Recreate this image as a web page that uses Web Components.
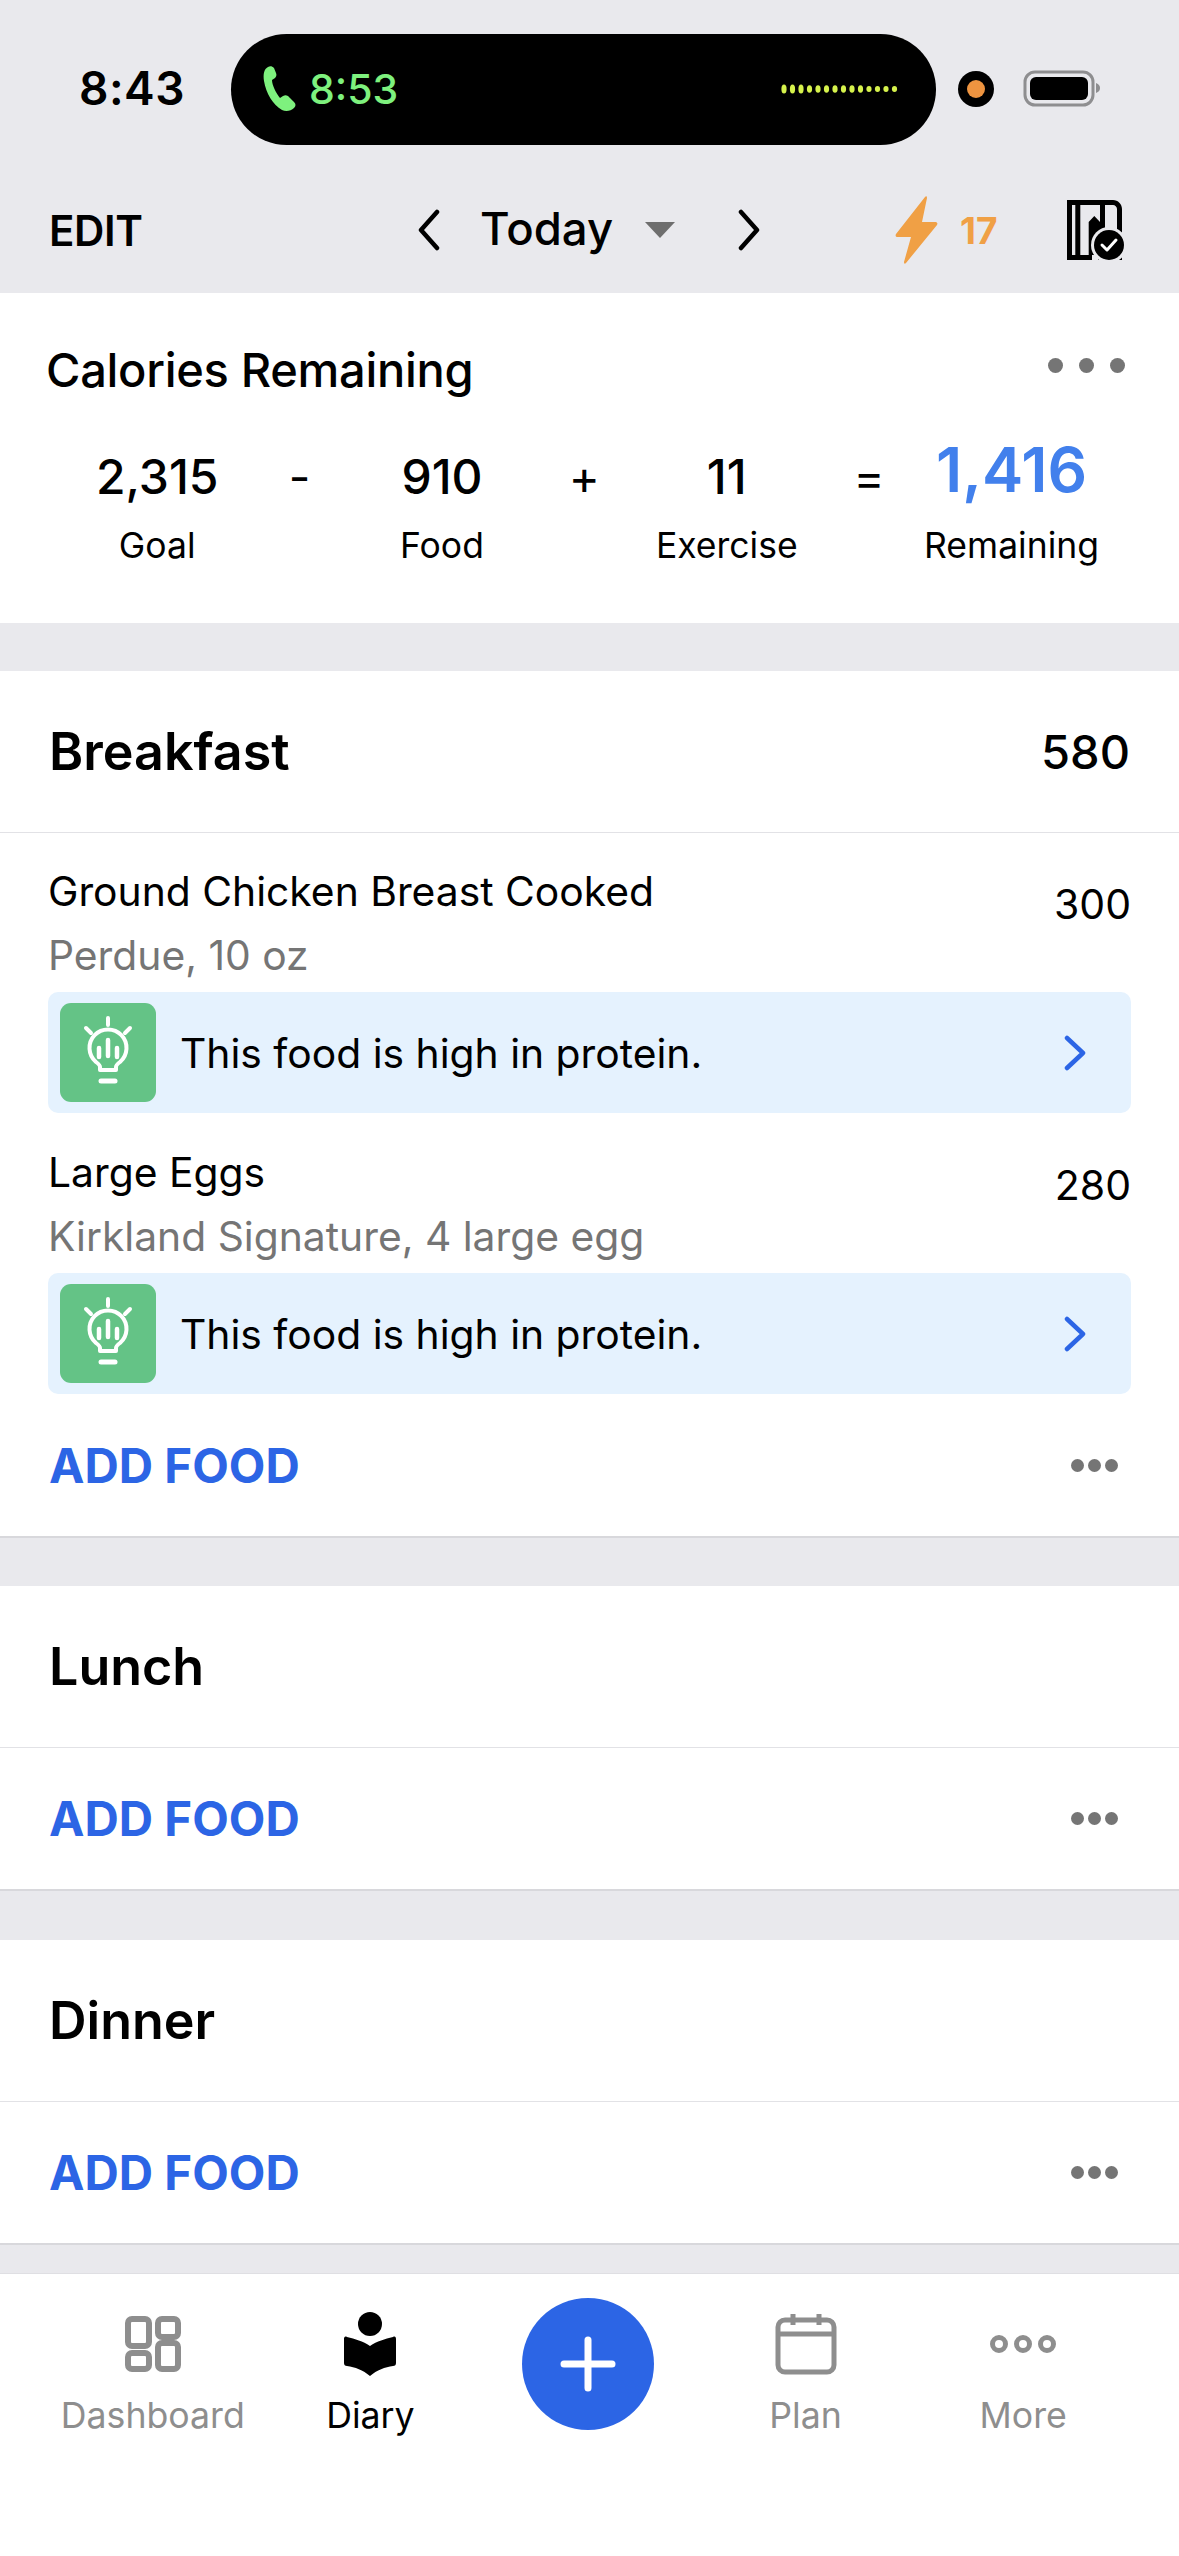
<!DOCTYPE html>
<html lang="en">

<head>
  <meta charset="UTF-8" />
  <title>Diary</title>
  <style>
    html, body {
      margin: 0;
      height: 2556px;
      overflow: hidden;
      background: #e9e9ed;
      font-family: Inter, "Liberation Sans", sans-serif;
      color: #000;
    }

    diary-app {
      --blue: #2c65e5;
      --gray: #757575;
    }
  </style>
</head>

<body>
  <diary-app>
    <status-bar></status-bar>
    <nav-bar></nav-bar>
    <calorie-card></calorie-card>
    <meal-section name="Breakfast" total="580" style="margin-top:48px">
      <food-item name="Ground Chicken Breast Cooked" detail="Perdue, 10 oz" cal="300"></food-item>
      <food-item name="Large Eggs" detail="Kirkland Signature, 4 large egg" cal="280"></food-item>
    </meal-section>
    <meal-section name="Lunch" style="margin-top:48px"></meal-section>
    <meal-section name="Dinner" style="margin-top:49px"></meal-section>
    <tab-bar></tab-bar>
  </diary-app>

  <script>
    class Base extends HTMLElement {
      constructor() {
        super();
        this.attachShadow({ mode: "open" });
      }

      connectedCallback() {
        this.shadowRoot.innerHTML = this.render();
      }

      attr(name) {
        return this.getAttribute(name) || "";
      }
    }

    class DiaryApp extends Base {
      render() {
        return `
      <style>
        :host { display: flex; flex-direction: column; height: 2556px; }
      </style>
      <slot></slot>`;
      }
    }

    class StatusBar extends Base {
      render() {
        return `
      <style>
        :host { display: flex; align-items: center; height: 177px; box-sizing: border-box; padding: 33px 0 32px 79px; }
        .time { width: 152px; font-size: 46px; font-weight: 600; letter-spacing: 0.5px; margin-top: -2px; }
        .island {
          width: 705px; height: 111px; border-radius: 56px; background: #000;
          display: flex; align-items: center; box-sizing: border-box; padding: 0 38px 0 32px;
        }
        .call { font-size: 41px; font-weight: 500; color: #7ef17e; margin-left: 12px; flex: 1; }
        .dot { width: 36px; height: 36px; margin-left: 22px; border-radius: 50%; background: #000; display: grid; place-items: center; }
        .dot i { width: 18px; height: 18px; border-radius: 50%; background: #ee9440; }
        .battery { margin-left: 29px; }
      </style>
      <span class="time">8:43</span>
      <div class="island">
        <svg width="34" height="46" viewBox="0 0 34 46"><path d="M5 1C1 3 0 8 1 15c2 12 9 24 18 29 4 2 9 1 12-2 2-2 2-4 0-6l-6-6c-2-1-3-1-5 0l-3 2C13 27 9 19 9 14l3-2c1-1 2-3 1-5L11 2C9 0 7 0 5 1z" fill="#7ef17e"/></svg>
        <span class="call">8:53</span>
        <svg width="117" height="12" viewBox="0 0 117 12" fill="#d6f24c">
          ${[...Array(14)].map((_, i) => `<ellipse cx="${3 + i * 8.5}" cy="6" rx="2.6" ry="${i < 3 ? 4.6 : i < 10 ? 3.8 : 3}"/>`).join("")}
        </svg>
      </div>
      <div class="dot"><i></i></div>
      <svg class="battery" width="78" height="38" viewBox="0 0 78 38">
        <rect x="2" y="2" width="68" height="33" rx="10" fill="none" stroke="#8e8e90" stroke-width="3"/>
        <rect x="7" y="7" width="58" height="23" rx="6" fill="#000"/>
        <path d="M73 13c3 1 4 3 4 5s-1 4-4 5z" fill="#8e8e90"/>
      </svg>`;
      }
    }

    class NavBar extends Base {
      render() {
        return `
      <style>
        :host { display: flex; align-items: center; height: 116px; box-sizing: border-box; padding: 0 48px 10px 49px; }
        .edit { width: 368px; font-size: 42px; font-weight: 600; letter-spacing: -0.4px; }
        .today { font-size: 45.5px; font-weight: 500; margin: -4px 32px 0 40px; }
        .arrow { width: 0; height: 0; border: 15px solid transparent; border-top: 16px solid #6e6e6e; border-bottom: 0; }
        .next { margin-left: 63px; }
        .bolt { margin-left: 134px; }
        .streak { font-size: 37px; font-weight: 700; color: #f0a045; margin-left: 22px; width: 107px; }
      </style>
      <span class="edit">EDIT</span>
      <svg width="23" height="42" viewBox="0 0 23 42"><path d="M20 3L4 21l16 18" fill="none" stroke="#000" stroke-width="4.5" stroke-linecap="round" stroke-linejoin="round"/></svg>
      <span class="today">Today</span>
      <span class="arrow"></span>
      <svg class="next" width="23" height="42" viewBox="0 0 23 42"><path d="M3 3l16 18L3 39" fill="none" stroke="#000" stroke-width="4.5" stroke-linecap="round" stroke-linejoin="round"/></svg>
      <svg class="bolt" width="43" height="68" viewBox="0 0 43 68"><path d="M30 1L1 38c-1 2 0 3 2 3h13L9 66c0 2 1 2 2 1l31-38c1-2 0-3-2-3H27l5-24c0-2-1-2-2-1z" fill="#f0a045"/></svg>
      <span class="streak">17</span>
      <svg width="58" height="60" viewBox="0 0 58 60">
        <path fill-rule="evenodd" fill="#000" d="M0 0h46c5 0 9 4 9 9v51H0zM5 5v50h3.3V5zM13.3 5v50h8.4V22l5.6-6 5.7 6V5zM38 5v50h12V9c0-2-2-4-4-4z"/>
        <path d="M13.3 55h12v5h-12z" fill="#000"/>
        <circle cx="42" cy="45" r="18" fill="#e9e9ed"/>
        <rect x="25" y="55" width="6" height="5" fill="#e9e9ed"/>
        <circle cx="42" cy="45" r="15" fill="#000"/>
        <path d="M35 45l5 5 9-10" fill="none" stroke="#fff" stroke-width="3" stroke-linecap="round" stroke-linejoin="round"/>
      </svg>`;
      }
    }

    class MoreDots extends Base {
      render() {
        const size = this.attr("size") || 12;
        const gap = this.attr("gap") || 12;
        return `
      <style>
        :host { display: flex; gap: ${gap}px; }
        i { width: ${size}px; height: ${size}px; border-radius: 50%; background: #757575; }
      </style>
      <i></i><i></i><i></i>`;
      }
    }

    class CalorieCard extends Base {
      render() {
        const col = (num, label, cls = "") => `
          <div class="num ${cls}">${num}</div>
          <div class="lbl">${label}</div>`;
        return `
      <style>
        :host { display: block; height: 330px; background: #fff; box-sizing: border-box; padding: 46px 54px 0 46px; }
        .top { display: flex; justify-content: space-between; align-items: center; height: 52px; }
        .title { font-size: 47px; font-weight: 500; letter-spacing: -0.3px; margin-top: 9px; }
        .sum {
          display: grid; grid-template-columns: repeat(7, 142.4px); margin: 56px 0 0 40px;
          justify-items: center;
        }
        .cell { display: flex; flex-direction: column; align-items: center; white-space: nowrap; width: 142px; }
        .num { font-size: 48px; font-weight: 500; height: 60px; line-height: 60px; }
        .lbl { font-size: 35.5px; margin-top: 16px; line-height: 46px; }
        .op { font-size: 47px; height: 60px; line-height: 60px; }
        .rem { font-size: 62px; font-weight: 600; color: #4280ec; line-height: 60px; margin-top: -7px; margin-bottom: 7px; }
      </style>
      <div class="top">
        <span class="title">Calories Remaining</span>
        <more-dots size="15" gap="16"></more-dots>
      </div>
      <div class="sum">
        <div class="cell">${col("2,315", "Goal")}</div>
        <div class="op">-</div>
        <div class="cell">${col("910", "Food")}</div>
        <div class="op">+</div>
        <div class="cell">${col("11", "Exercise")}</div>
        <div class="op">=</div>
        <div class="cell">${col("1,416", "Remaining", "rem")}</div>
      </div>`;
      }
    }

    class MealSection extends Base {
      render() {
        return `
      <style>
        :host { display: block; background: #fff; }
        .head {
          display: flex; justify-content: space-between; align-items: center;
          height: 161px; border-bottom: 1px solid #e2e2e6; padding: 0 49px; font-size: 52px; font-weight: 600;
        }
        .total { font-size: 47px; font-weight: 500; }
        .add {
          display: flex; justify-content: space-between; align-items: center; box-sizing: border-box;
          height: 143px; padding: 0 61px 0 49px; border-bottom: 2px solid #d8d8dc;
        }
        .add span { font-size: 47.5px; font-weight: 700; color: var(--blue); }
      </style>
      <div class="head">
        <span>${this.attr("name")}</span>
        <span class="total">${this.attr("total")}</span>
      </div>
      <slot></slot>
      <div class="add">
        <span>ADD FOOD</span>
        <more-dots size="13" gap="4"></more-dots>
      </div>`;
      }
    }

    class FoodItem extends Base {
      render() {
        return `
      <style>
        :host { display: block; height: 281px; box-sizing: border-box; padding: 0 48px; }
        .row { display: flex; justify-content: space-between; height: 159px; }
        .name { font-size: 40.8px; line-height: 50px; margin-top: 33px; }
        .detail { font-size: 40.8px; line-height: 50px; margin-top: 14px; color: #757575; }
        .cal { font-size: 41px; line-height: 50px; margin-top: 46px; }
      </style>
      <div class="row">
        <div>
          <div class="name">${this.attr("name")}</div>
          <div class="detail">${this.attr("detail")}</div>
        </div>
        <div class="cal">${this.attr("cal")}</div>
      </div>
      <tip-row>This food is high in protein.</tip-row>`;
      }
    }

    class TipRow extends Base {
      render() {
        return `
      <style>
        :host {
          display: flex; align-items: center; height: 121px; box-sizing: border-box;
          background: #e5f2fe; border-radius: 10px; padding: 0 43px 0 12px; font-size: 40.8px;
        }
        .badge { width: 96px; height: 99px; border-radius: 11px; background: #64c386; }
        .badge svg { display: block; }
        .txt { flex: 1; margin-left: 24px; }
      </style>
      <div class="badge">
        <svg width="96" height="99" viewBox="0 0 96 99" fill="none" stroke="#fff" stroke-width="4" stroke-linecap="round">
          <path d="M48 15v7M26 25l5 5M70 25l-5 5"/>
          <path d="M40 67v-3c0-2-2-3.500-4-5a18.500 18.500 0 1 1 24 0c-2 1.500-4 3-4 5v3z" stroke-linejoin="round"/>
          <path d="M48 37v16M39 45v9M57 45v9" stroke-width="4.500"/>
          <path d="M41 78h14" stroke-width="5"/>
        </svg>
      </div>
      <span class="txt"><slot></slot></span>
      <svg width="25" height="36" viewBox="0 0 25 36"><path d="M4 3l16 15L4 33" fill="none" stroke="#2c65e5" stroke-width="4.5" stroke-linecap="round" stroke-linejoin="round"/></svg>`;
      }
    }

    class TabBar extends Base {
      render() {
        return `
      <style>
        :host {
          display: grid; grid-template-columns: repeat(5, 217.6px); margin-top: 28px;
          height: 283px; background: #fff; padding: 0 0 0 44px; box-sizing: border-box;
          border-top: 1px solid #dfdfe3;
        }
        .fab { width: 132px; height: 132px; border-radius: 50%; background: #2c65e5; margin: 24px auto 0; display: grid; place-items: center; }
      </style>
      <tab-item label="Dashboard">
        <svg width="56" height="56" viewBox="0 0 56 56" fill="none" stroke="#8e8e8e" stroke-width="6">
          <rect x="3" y="3" width="21" height="27" rx="4"/><rect x="33" y="3" width="20" height="18" rx="4"/>
          <rect x="3" y="37" width="21" height="16" rx="4"/><rect x="33" y="27" width="20" height="26" rx="4"/>
        </svg>
      </tab-item>
      <tab-item label="Diary" active>
        <svg width="54" height="64" viewBox="0 0 54 64" fill="#000">
          <circle cx="27" cy="12" r="12"/>
          <path d="M1 27c0-2 1-3 3-2 8 2 16 4 23 9 7-5 15-7 23-9 2-1 3 0 3 2v24c0 2-1 3-3 3-8 1-16 4-23 10-7-6-15-9-23-10-2 0-3-1-3-3z"/>
        </svg>
      </tab-item>
      <div class="fab">
        <svg width="60" height="60" viewBox="0 0 60 60"><path d="M30 6v48M6 30h48" stroke="#fff" stroke-width="7" stroke-linecap="round"/></svg>
      </div>
      <tab-item label="Plan">
        <svg width="62" height="62" viewBox="0 0 62 62" fill="none" stroke="#8e8e8e" stroke-width="5">
          <rect x="3" y="7" width="56" height="52" rx="7"/><path d="M3 21h56M18 1v11M44 1v11"/>
        </svg>
      </tab-item>
      <tab-item label="More">
        <svg width="68" height="62" viewBox="0 0 68 62" fill="none" stroke="#8e8e8e" stroke-width="5">
          <circle cx="10" cy="31" r="6.5"/><circle cx="34" cy="31" r="6.5"/><circle cx="58" cy="31" r="6.5"/>
        </svg>
      </tab-item>`;
      }
    }

    class TabItem extends Base {
      render() {
        return `
      <style>
        :host { display: flex; flex-direction: column; align-items: center; padding-top: 38px; color: #8e8e8e; }
        :host([active]) { color: #000; }
        .icon { height: 64px; display: flex; align-items: center; }
        .lbl { font-size: 35.7px; line-height: 44px; margin-top: 17px; white-space: nowrap; }
      </style>
      <div class="icon"><slot></slot></div>
      <span class="lbl">${this.attr("label")}</span>`;
      }
    }

    customElements.define("diary-app", DiaryApp);
    customElements.define("status-bar", StatusBar);
    customElements.define("nav-bar", NavBar);
    customElements.define("more-dots", MoreDots);
    customElements.define("calorie-card", CalorieCard);
    customElements.define("meal-section", MealSection);
    customElements.define("food-item", FoodItem);
    customElements.define("tip-row", TipRow);
    customElements.define("tab-bar", TabBar);
    customElements.define("tab-item", TabItem);
  </script>
</body>

</html>
